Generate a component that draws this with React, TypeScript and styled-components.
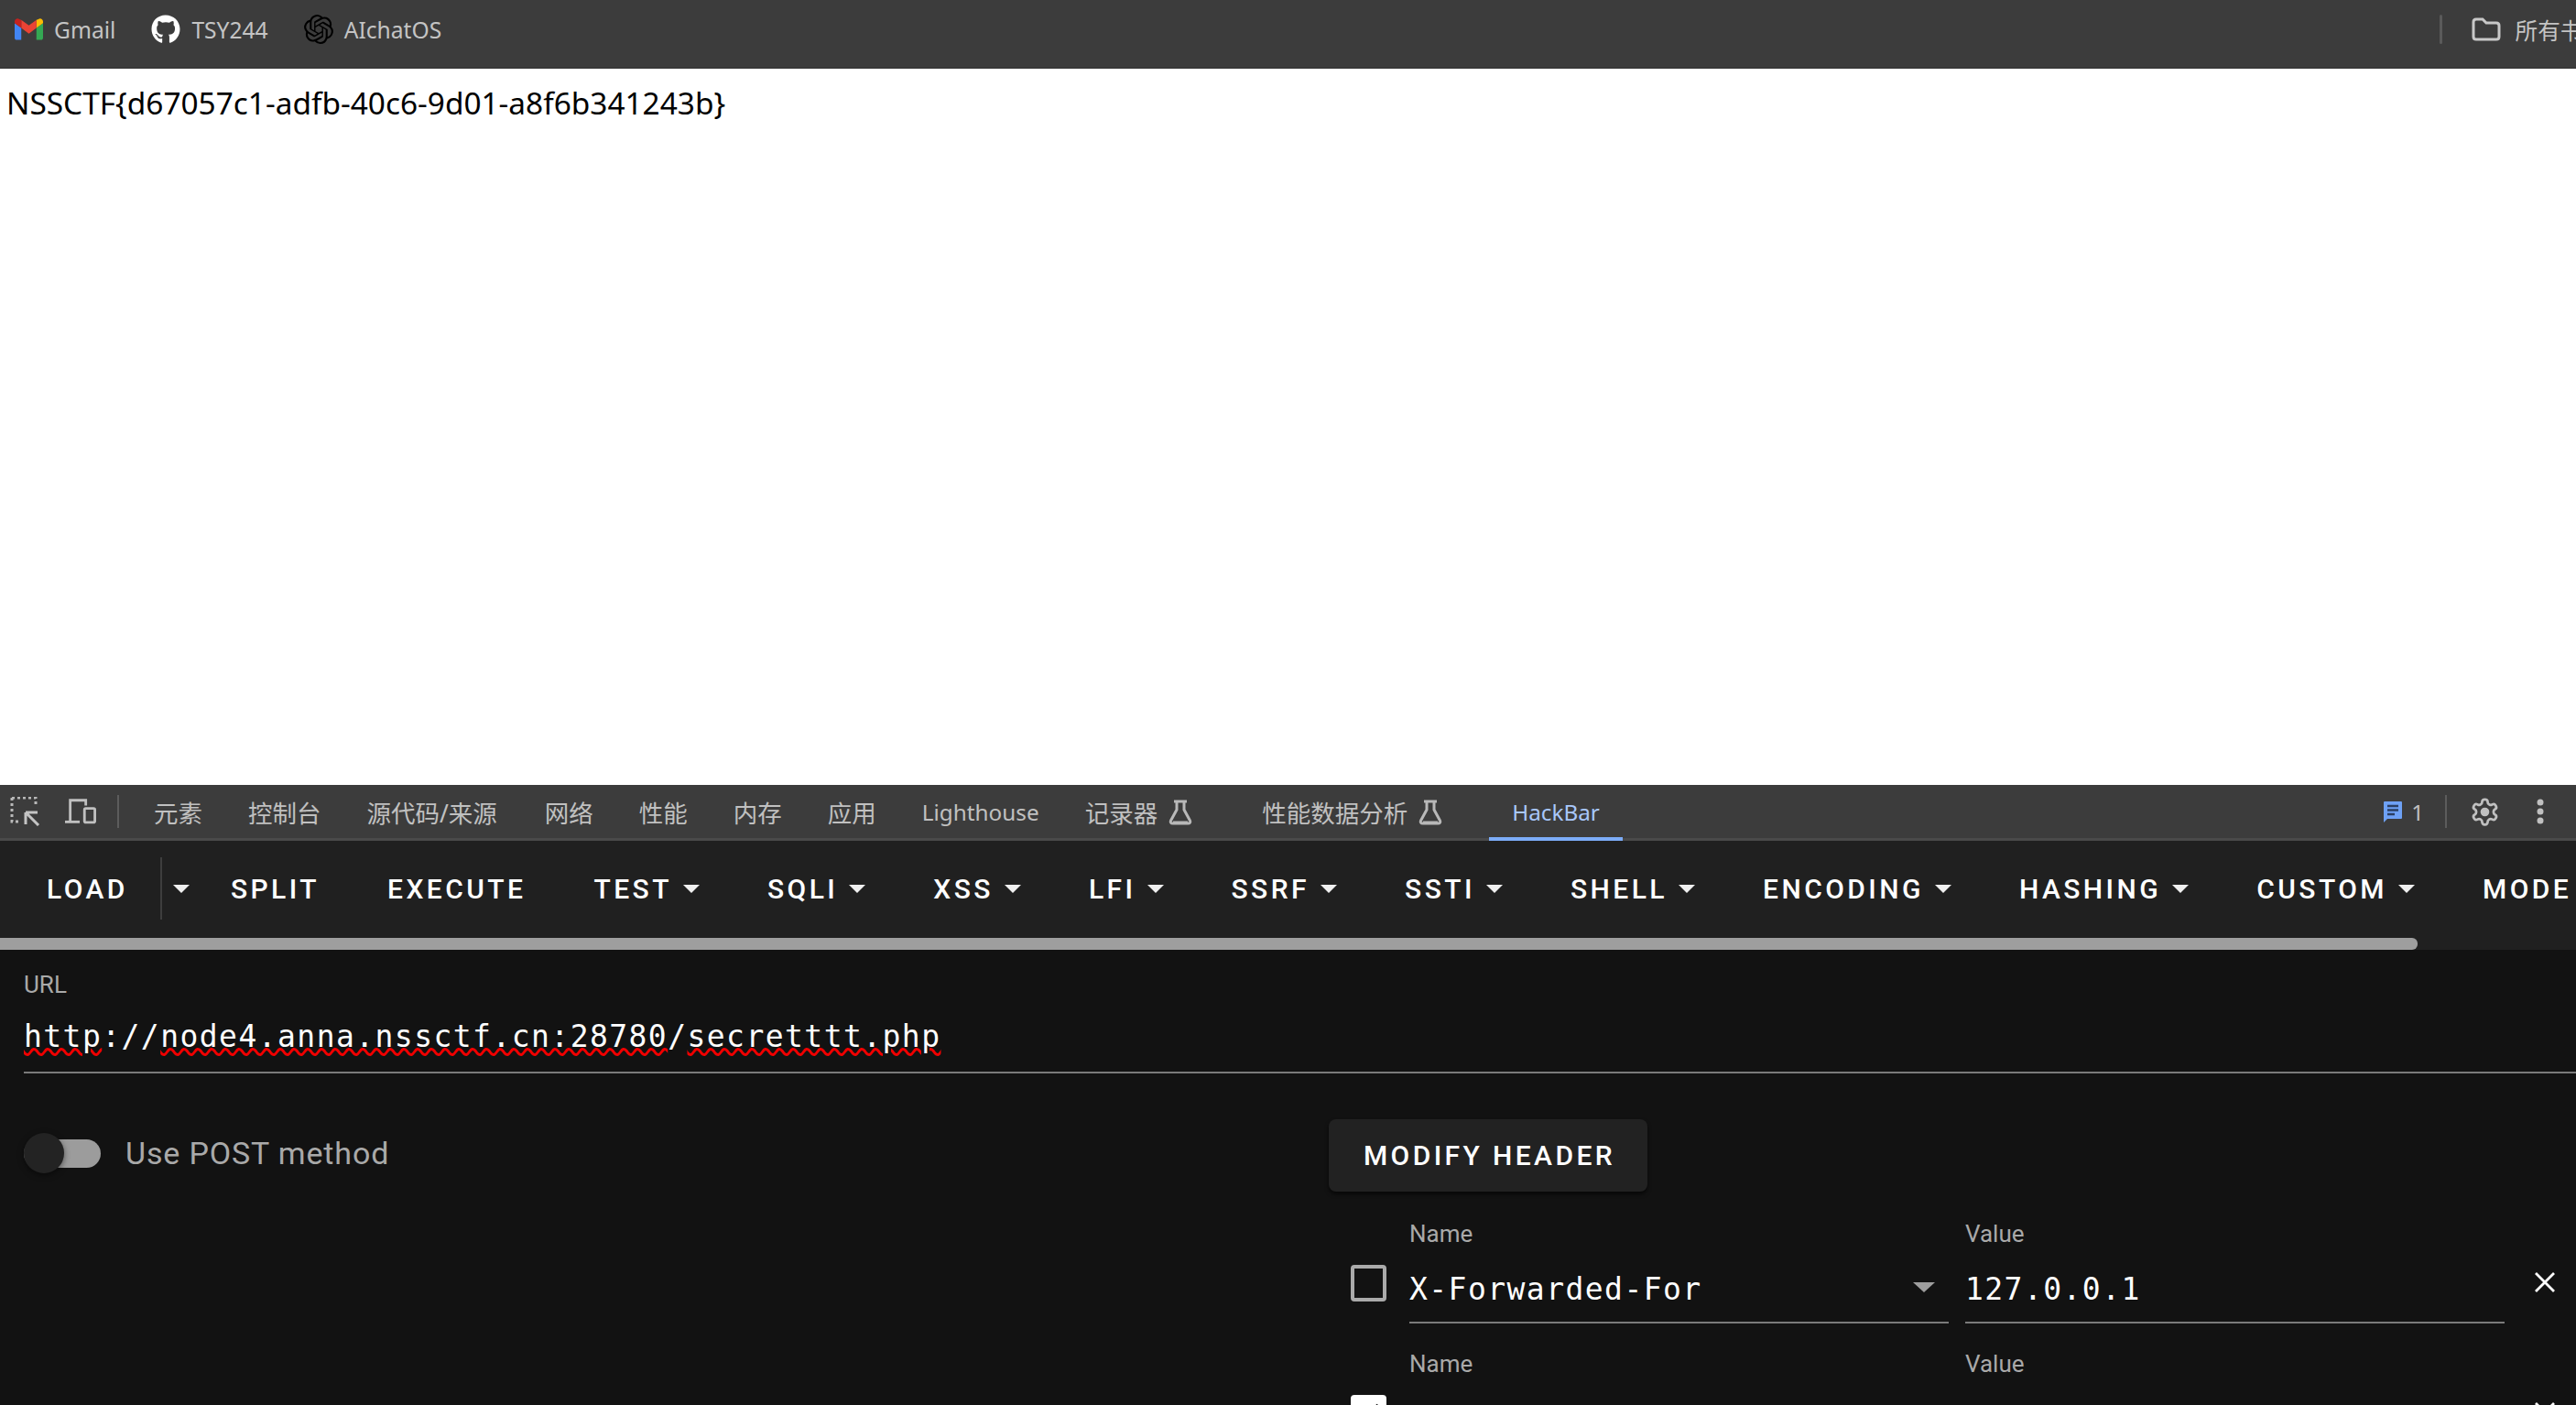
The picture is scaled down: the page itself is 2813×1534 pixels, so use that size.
import React from "react";
import styled, { createGlobalStyle } from "styled-components";
import { FaGithub } from "react-icons/fa";
import { SiOpenai } from "react-icons/si";

const Global = createGlobalStyle`
  html, body { margin: 0; padding: 0; background: #fff; overflow: hidden; }
  * { box-sizing: border-box; }
`;

const Page = styled.div`
  width: 2813px;
  height: 1534px;
  overflow: hidden;
  display: flex;
  flex-direction: column;
  font-family: "Noto Sans", "Noto Sans CJK SC", sans-serif;
`;

const BookmarkBar = styled.div`
  height: 75px;
  flex: none;
  background: #3c3c3c;
  border-bottom: 2px solid #383838;
  display: flex;
  align-items: flex-start;
  padding: 16px 0 0 16px;
  overflow: hidden;
`;

const Bookmark = styled.div`
  display: flex;
  align-items: center;
  height: 32px;
  gap: 12px;
  margin-right: 39px;
  font-size: 24.6px;
  color: #c4c4c4;
  white-space: nowrap;
`;

const BookmarkSpacer = styled.div`
  flex: 1;
`;

const BarDivider = styled.div`
  width: 3px;
  height: 32px;
  border-radius: 2px;
  background: #5a5a5a;
  margin-right: 32px;
`;

const FolderBookmark = styled(Bookmark)`
  margin-right: -32px;
  gap: 16px;
`;

const Content = styled.div`
  height: 782px;
  flex: none;
  background: #fff;
  padding: 15px 0 0 7px;
  font-size: 33.4px;
  line-height: 44px;
  color: #000;
`;

const TabBar = styled.div`
  height: 61px;
  flex: none;
  background: #3c3c3c;
  border-bottom: 3px solid #4a4a4a;
  display: flex;
  align-items: stretch;
  padding-left: 11px;
  font-size: 26.5px;
  color: #c0c0c0;
`;

const ToolIcon = styled.div<{ $tight?: boolean }>`
  width: 34px;
  display: flex;
  align-items: center;
  justify-content: center;
  margin-right: ${(p) => (p.$tight ? "23px" : "26px")};
  svg { display: block; }
`;

const TabDivider = styled.div<{ $after?: number }>`
  width: 2px;
  height: 36px;
  align-self: center;
  background: #5c5c5c;
  margin-right: ${(p) => p.$after ?? 0}px;
`;

const Tab = styled.div<{ $active?: boolean; $lab?: boolean; $latin?: boolean; $slash?: boolean }>`
  display: flex;
  align-items: center;
  gap: 12px;
  padding: 2px 25px 0;
  margin-right: ${(p) => (p.$lab ? "26px" : p.$slash ? "2px" : "0")};
  margin-bottom: -3px;
  white-space: nowrap;
  font-size: ${(p) => (p.$latin ? "24.3px" : "inherit")};
  color: ${(p) => (p.$active ? "#a8c7fa" : "#c0c0c0")};
  border-bottom: 4px solid ${(p) => (p.$active ? "#7cacf8" : "transparent")};
`;

const TabSpacer = styled.div`
  flex: 1;
`;

const Issues = styled.div`
  display: flex;
  align-items: center;
  gap: 9px;
  font-family: "Noto Sans", sans-serif;
  font-size: 24px;
  color: #c0c0c0;
  margin-right: 23px;
`;

const GearBox = styled.div`
  display: flex;
  align-items: center;
  margin: 0 40px 0 25px;
`;

const DotsBox = styled.div`
  display: flex;
  align-items: center;
  margin-right: 35px;
`;

const Toolbar = styled.div`
  height: 106px;
  flex: none;
  background: #202020;
  display: flex;
  align-items: center;
  padding: 0 0 2px 14px;
  overflow: hidden;
`;

const ToolButton = styled.div`
  display: flex;
  align-items: center;
  gap: 12px;
  padding: 0 37px;
  font-family: Roboto, sans-serif;
  font-weight: 500;
  font-size: 30px;
  letter-spacing: 3.45px;
  color: #fff;
  white-space: nowrap;
  flex: none;
`;

const LoadButton = styled(ToolButton)`
  padding-right: 35px;
`;

const SplitCaret = styled.div`
  height: 68px;
  border-left: 2px solid #3e3e3e;
  display: flex;
  align-items: center;
  padding-left: 12px;
  margin-right: 8px;
  flex: none;
`;

const Caret = styled.span<{ $large?: boolean }>`
  display: block;
  flex: none;
  width: 0;
  height: 0;
  border-left: ${(p) => (p.$large ? "12px" : "9px")} solid transparent;
  border-right: ${(p) => (p.$large ? "12px" : "9px")} solid transparent;
  border-top: ${(p) => (p.$large ? "11px solid #9e9e9e" : "9px solid #f0f0f0")};
`;

const ScrollTrack = styled.div`
  height: 13px;
  flex: none;
  background: #202020;
  padding-right: 173px;
`;

const ScrollThumb = styled.div`
  height: 100%;
  background: #9e9e9e;
  border-radius: 0 6px 6px 0;
`;

const Main = styled.div`
  flex: 1;
  background: #121212;
  padding: 26px 0 0 26px;
  overflow: hidden;
`;

const FieldLabel = styled.div`
  font-family: Roboto, sans-serif;
  font-size: 26px;
  line-height: 24px;
  color: #a9a9a9;
`;

const UrlValue = styled.div`
  margin-top: 17px;
  height: 68px;
  padding-top: 5px;
  border-bottom: 2px solid #7a7a7a;
  font-family: "DejaVu Sans Mono", monospace;
  font-size: 33px;
  letter-spacing: 1.44px;
  line-height: 46px;
  color: #fff;
  white-space: nowrap;
`;

const Misspelled = styled.span`
  text-decoration: underline wavy #f00000 3px;
  text-underline-offset: 1px;
`;

const Columns = styled.div`
  display: grid;
  grid-template-columns: 1425px 1fr;
  margin-top: 50px;
`;

const SwitchRow = styled.div`
  display: flex;
  align-items: flex-start;
  gap: 27px;
  padding-top: 15px;
`;

const SwitchTrack = styled.div`
  position: relative;
  width: 84px;
  height: 31px;
  margin-top: 7px;
  border-radius: 16px;
  background: #9c9c9c;
`;

const SwitchThumb = styled.div`
  position: absolute;
  left: 0;
  top: -7px;
  width: 44px;
  height: 44px;
  border-radius: 50%;
  background: #232323;
  box-shadow: 0 2px 6px rgba(0, 0, 0, 0.5);
`;

const SwitchLabel = styled.div`
  font-family: Roboto, sans-serif;
  font-size: 34px;
  line-height: 44px;
  letter-spacing: 0.85px;
  color: #a9a9a9;
`;

const ModifyButton = styled.div`
  width: 348px;
  height: 79px;
  padding-left: 3px;
  display: flex;
  align-items: center;
  justify-content: center;
  border-radius: 8px;
  background: #222;
  box-shadow: 0 3px 4px rgba(0, 0, 0, 0.6);
  font-family: Roboto, sans-serif;
  font-weight: 500;
  font-size: 30px;
  letter-spacing: 3.4px;
  color: #fff;
`;

const HeaderRow = styled.div`
  display: grid;
  grid-template-columns: 39px 614px 607px 60px;
  padding-left: 24px;
  margin-top: 34px;
  & + & { margin-top: 32px; }
`;

const Check = styled.div<{ $on?: boolean }>`
  width: 39px;
  height: 40px;
  margin-top: 46px;
  border-radius: 4px;
  border: 4px solid ${(p) => (p.$on ? "#fff" : "#aaa")};
  background: ${(p) => (p.$on ? "#fff" : "transparent")};
  display: flex;
  svg { display: block; }
`;

const HeaderField = styled.div`
  margin-left: 25px;
  &:nth-child(3) { margin-left: 18px; }
`;

const HeaderInput = styled.div`
  height: 65px;
  margin-top: 21px;
  border-bottom: 2px solid #7a7a7a;
  padding-top: 5px;
  display: flex;
  justify-content: space-between;
  font-family: "DejaVu Sans Mono", monospace;
  font-size: 33px;
  letter-spacing: 1.44px;
  line-height: 46px;
  color: #fff;
  white-space: nowrap;
`;

const SelectCaret = styled.div`
  padding: 15px 15px 0 0;
`;

const CloseBox = styled.div`
  margin: 53px 0 0 32px;
  color: #fff;
  svg { display: block; }
`;

const Flask = () => (
  <svg width="26" height="28" viewBox="0 0 26 28" fill="none" stroke="#b8b8b8" strokeWidth="3">
    <path d="M6 2h14M9 2v9L2.500 23c-.8 1.600.2 3 2 3h17c1.800 0 2.800-1.400 2-3L17 11V2" />
    <path d="M5 25h16" strokeWidth="3" />
  </svg>
);

const CloseIcon = () => (
  <svg width="24" height="24" viewBox="0 0 24 24" stroke="#fff" strokeWidth="2.800">
    <path d="M2 2l20 20M22 2L2 22" />
  </svg>
);

const menu: [string, boolean][] = [
  ["SPLIT", false],
  ["EXECUTE", false],
  ["TEST", true],
  ["SQLI", true],
  ["XSS", true],
  ["LFI", true],
  ["SSRF", true],
  ["SSTI", true],
  ["SHELL", true],
  ["ENCODING", true],
  ["HASHING", true],
  ["CUSTOM", true],
  ["MODE", false],
];

export default function App() {
  return (
    <Page>
      <Global />
      <BookmarkBar>
        <Bookmark>
          <svg width="31" height="24" viewBox="0 2.600 24 18">
            <path fill="#4285f4" d="M1.600 20.500h4v-10L0 6.300v12.600c0 .9.7 1.600 1.600 1.600z" />
            <path fill="#34a853" d="M18.400 20.500h4c.9 0 1.600-.7 1.600-1.600V6.300l-5.600 4.200z" />
            <path fill="#fbbc04" d="M18.400 3.600v6.900L24 6.300V5c0-2-2.300-3.200-3.900-2z" />
            <path fill="#ea4335" d="M5.600 10.500V3.600L12 8.400l6.400-4.800v6.900L12 15.300z" />
            <path fill="#c5221f" d="M0 5v1.300l5.600 4.200V3.600L3.900 3C2.300 1.800 0 3 0 5z" />
          </svg>
          Gmail
        </Bookmark>
        <Bookmark>
          <FaGithub size={32} color="#fff" />
          TSY244
        </Bookmark>
        <Bookmark>
          <SiOpenai size={32} color="#000" />
          AIchatOS
        </Bookmark>
        <BookmarkSpacer />
        <BarDivider />
        <FolderBookmark>
          <svg width="32" height="26" viewBox="0 0 32 26" fill="none" stroke="#c8c8c8" strokeWidth="3">
            <path d="M2 5c0-1.700 1-3 3-3h7l4 4h11c2 0 3 1 3 3v12c0 2-1 3-3 3H5c-2 0-3-1-3-3z" />
          </svg>
          所有书签
        </FolderBookmark>
      </BookmarkBar>

      <Content>NSSCTF{"{"}d67057c1-adfb-40c6-9d01-a8f6b341243b{"}"}</Content>

      <TabBar>
        <ToolIcon>
          <svg width="34" height="32" viewBox="0 0 34 32" fill="none">
            <path d="M2 1h26v9M2 1v26h9" stroke="#b8b8b8" strokeWidth="3" strokeDasharray="3 3" />
            <path d="M17 17v13M17 17h13M17 17l14 14" stroke="#c4c4c4" strokeWidth="3" />
          </svg>
        </ToolIcon>
        <ToolIcon $tight>
          <svg width="36" height="30" viewBox="0 0 36 30" fill="none" stroke="#c0c0c0" strokeWidth="3">
            <path d="M6 26V2h18v6" />
            <path d="M0 27h17" />
            <rect x="22.500" y="11.500" width="12" height="16" rx="1.500" />
          </svg>
        </ToolIcon>
        <TabDivider $after={13} />
        <Tab>元素</Tab>
        <Tab>控制台</Tab>
        <Tab $slash>源代码/来源</Tab>
        <Tab>网络</Tab>
        <Tab>性能</Tab>
        <Tab>内存</Tab>
        <Tab>应用</Tab>
        <Tab $latin>Lighthouse</Tab>
        <Tab $lab>
          记录器
          <Flask />
        </Tab>
        <Tab $lab>
          性能数据分析
          <Flask />
        </Tab>
        <Tab $active $latin>HackBar</Tab>
        <TabSpacer />
        <Issues>
          <svg width="22" height="26" viewBox="0 0 22 26">
            <path fill="#6ea1f5" d="M2 2h18a1 1 0 0 1 1 1v17a1 1 0 0 1-1 1H5l-4 4V3a1 1 0 0 1 1-1z" />
            <path stroke="#2b3f63" strokeWidth="2.500" d="M5 7h12M5 11.500h12M5 16h8" />
          </svg>
          1
        </Issues>
        <TabDivider />
        <GearBox>
          <svg width="33" height="35" viewBox="0 0 24 24" fill="none" stroke="#c0c0c0" strokeWidth="2">
            <path d="M12.220 2h-.440a2 2 0 0 0-2 2v.180a2 2 0 0 1-1 1.730l-.430.250a2 2 0 0 1-2 0l-.150-.080a2 2 0 0 0-2.730.730l-.220.380a2 2 0 0 0 .730 2.730l.150.100a2 2 0 0 1 1 1.720v.510a2 2 0 0 1-1 1.740l-.150.090a2 2 0 0 0-.730 2.730l.220.380a2 2 0 0 0 2.730.730l.150-.080a2 2 0 0 1 2 0l.430.250a2 2 0 0 1 1 1.730V20a2 2 0 0 0 2 2h.440a2 2 0 0 0 2-2v-.180a2 2 0 0 1 1-1.730l.430-.250a2 2 0 0 1 2 0l.150.080a2 2 0 0 0 2.730-.730l.220-.390a2 2 0 0 0-.730-2.730l-.150-.080a2 2 0 0 1-1-1.740v-.500a2 2 0 0 1 1-1.740l.150-.090a2 2 0 0 0 .730-2.730l-.220-.380a2 2 0 0 0-2.730-.730l-.150.080a2 2 0 0 1-2 0l-.430-.250a2 2 0 0 1-1-1.730V4a2 2 0 0 0-2-2z" />
            <circle cx="12" cy="12" r="3.500" fill="#c0c0c0" stroke="none" />
          </svg>
        </GearBox>
        <DotsBox>
          <svg width="8" height="28" viewBox="0 0 8 28" fill="#c0c0c0">
            <circle cx="4" cy="4" r="3.500" />
            <circle cx="4" cy="14" r="3.500" />
            <circle cx="4" cy="24" r="3.500" />
          </svg>
        </DotsBox>
      </TabBar>

      <Toolbar>
        <LoadButton>LOAD</LoadButton>
        <SplitCaret>
          <Caret />
        </SplitCaret>
        {menu.map(([label, hasCaret]) => (
          <ToolButton key={label}>
            {label}
            {hasCaret && <Caret />}
          </ToolButton>
        ))}
      </Toolbar>
      <ScrollTrack>
        <ScrollThumb />
      </ScrollTrack>

      <Main>
        <FieldLabel>URL</FieldLabel>
        <UrlValue>
          <Misspelled>http</Misspelled>://<Misspelled>node4.anna.nssctf.cn:28780</Misspelled>/
          <Misspelled>secretttt.php</Misspelled>
        </UrlValue>
        <Columns>
          <SwitchRow>
            <SwitchTrack>
              <SwitchThumb />
            </SwitchTrack>
            <SwitchLabel>Use POST method</SwitchLabel>
          </SwitchRow>
          <div>
            <ModifyButton>MODIFY HEADER</ModifyButton>
            <HeaderRow>
              <Check />
              <HeaderField>
                <FieldLabel>Name</FieldLabel>
                <HeaderInput>
                  X-Forwarded-For
                  <SelectCaret>
                    <Caret $large />
                  </SelectCaret>
                </HeaderInput>
              </HeaderField>
              <HeaderField>
                <FieldLabel>Value</FieldLabel>
                <HeaderInput>127.0.0.1</HeaderInput>
              </HeaderField>
              <CloseBox>
                <CloseIcon />
              </CloseBox>
            </HeaderRow>
            <HeaderRow>
              <Check $on>
                <svg width="31" height="32" viewBox="0 0 31 32" fill="none" stroke="#121212" strokeWidth="4">
                  <path d="M5 16l7 7L26 7" />
                </svg>
              </Check>
              <HeaderField>
                <FieldLabel>Name</FieldLabel>
              </HeaderField>
              <HeaderField>
                <FieldLabel>Value</FieldLabel>
              </HeaderField>
              <CloseBox>
                <CloseIcon />
              </CloseBox>
            </HeaderRow>
          </div>
        </Columns>
      </Main>
    </Page>
  );
}
